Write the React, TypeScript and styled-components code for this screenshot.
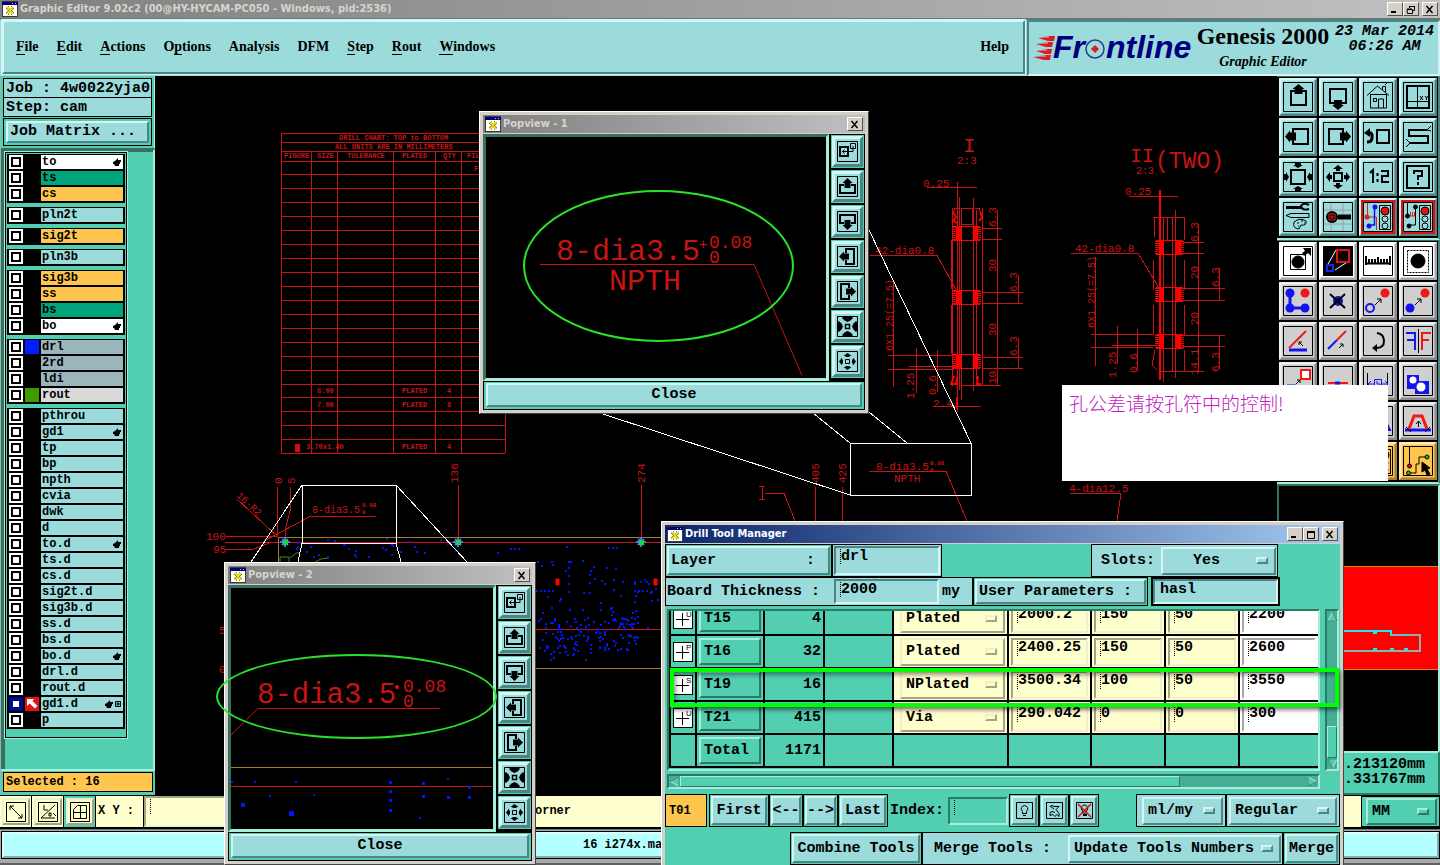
import React from "react";
import styled, { createGlobalStyle, css } from "styled-components";

const mono = `"Liberation Mono", "Courier New", monospace`;
const serif = `"Liberation Serif", "Times New Roman", serif`;
const sans = `"DejaVu Sans Condensed", "Liberation Sans", sans-serif`;

const c = {
  cyan: "#9bdbdb",
  teal: "#52ceb0",
  tealDark: "#357060",
  tealLight: "#a9ecdc",
  light: "#d3f6f4",
  shade: "#4f8484",
  cream: "#ffffce",
  orange: "#ffc64f",
  red: "#c81414",
  chrome: "#d4d0c8",
};

type Tone = "cyan" | "teal" | "cream" | "grey" | "white" | "orange" | "chrome";
const tones: Record<Tone, [string, string, string]> = {
  cyan: [c.cyan, c.light, c.shade],
  teal: [c.teal, c.tealLight, "#2b7a66"],
  cream: [c.cream, "#f0f0d0", "#a3a386"],
  grey: ["#cfcfcf", "#efefef", "#8a8a8a"],
  white: ["#ffffff", "#ffffff", "#a6a6a6"],
  orange: [c.orange, "#ffe9b0", "#a8803a"],
  chrome: [c.chrome, "#ffffff", "#55524c"],
};

const raised = (tone: Tone, w = 2) => css`
  background: ${tones[tone][0]};
  border: ${w}px solid;
  border-color: ${tones[tone][1]} ${tones[tone][2]} ${tones[tone][2]} ${tones[tone][1]};
`;
const sunken = (tone: Tone, w = 2) => css`
  background: ${tones[tone][0]};
  border: ${w}px solid;
  border-color: ${tones[tone][2]} ${tones[tone][1]} ${tones[tone][1]} ${tones[tone][2]};
`;

const GlobalStyle = createGlobalStyle`
  *, *::before, *::after { box-sizing: border-box; }
  body { margin: 0; background: #000; }
  button, input, select { font: inherit; color: inherit; margin: 0; padding: 0; border-radius: 0; }
`;

const Desktop = styled.div`
  position: relative;
  display: flex;
  flex-direction: column;
  min-height: 100vh;
  overflow: hidden;
  font: bold 15px/18px ${mono};
  color: #000;
  background: #000;
`;

/* ---------- window chrome ---------- */

const TitleBar = styled.header<{ $active?: boolean }>`
  display: flex;
  align-items: center;
  gap: 2px;
  height: 18px;
  padding: 0 2px;
  flex: none;
  font: bold 11px/16px ${sans};
  color: ${(p) => (p.$active ? "#fff" : "#d8d4cc")};
  background: ${(p) =>
    p.$active
      ? "linear-gradient(90deg, #0a246a, #a6caf0)"
      : "linear-gradient(90deg, #808080, #c0c0c0)"};
`;
const TitleText = styled.span`
  flex: 1;
  white-space: nowrap;
`;
const ChromeGroup = styled.div`
  display: flex;
  margin-right: 1px;
`;
const ChromeButton = styled.button`
  ${raised("chrome", 1)}
  width: 16px;
  height: 14px;
  display: grid;
  place-items: center;
`;

function AppGlyph() {
  return (
    <svg width="16" height="16" viewBox="0 0 16 16" shapeRendering="crispEdges">
      <rect x="0" y="0" width="16" height="16" fill="#3a3a3a" />
      <rect x="1" y="1" width="14" height="14" fill="#fff" />
      <rect x="0" y="1" width="16" height="3" fill="#00007c" />
      <path d="M10 2h1M13 2h1" stroke="#ccc" />
      <path d="M5 6l6 7M11 6l-6 7" stroke="#8a8a20" strokeWidth="3" />
      <path d="M5 6l6 7M11 6l-6 7" stroke="#e0d820" strokeWidth="2" />
    </svg>
  );
}

const chromePaths = {
  min: <path d="M1 7h5" strokeWidth="2" />,
  max: <path d="M1 1.5h8M1.5 1v7.5h7V1M1 2.5h8" />,
  restore: <path d="M3 1.5h6M3.5 1v2M8.5 1v4.500h-2M1 4.500h5.500v4h-5zM1 4h5" />,
  close: <path d="M1.500 1l6 7M7.500 1l-6 7" strokeWidth="1.500" />,
};

function Chrome({ kind, label }: { kind: keyof typeof chromePaths; label: string }) {
  return (
    <ChromeButton aria-label={label}>
      <svg width="10" height="9" viewBox="0 0 10 9" fill="none" stroke="#000">
        {chromePaths[kind]}
      </svg>
    </ChromeButton>
  );
}

/* ---------- header ---------- */

const HeaderRow = styled.div`
  display: flex;
  flex: none;
  height: 58px;
  border-top: 2px solid #5d7b7b;
  background: ${c.cyan};
`;
const MenuBar = styled.nav`
  flex: 1;
  display: flex;
  align-items: center;
  margin: 0 2px 2px 2px;
  padding: 0 14px 0 12px;
  gap: 18px;
  ${raised("cyan")}
  outline: 1px solid ${c.light};
  font: bold 14px/18px ${serif};
`;
const MenuItem = styled.a`
  color: inherit;
  text-decoration: none;
  &:last-child {
    margin-left: auto;
  }
`;
const Mnemonic = styled.span`
  border-bottom: 1px solid #000;
`;
const Brand = styled.div`
  ${sunken("cyan")}
  width: 413px;
  display: flex;
  align-items: flex-start;
  padding-left: 4px;
`;
const BrandTitle = styled.div`
  width: 136px;
  text-align: center;
  font: bold 24px/28px ${serif};
  white-space: nowrap;
`;
const BrandSub = styled.div`
  font: italic bold 14px/24px ${serif};
`;
const Clock = styled.div`
  flex: 1;
  padding-top: 2px;
  font: italic bold 15px/15px ${mono};
  text-align: center;
  white-space: nowrap;
`;

function Logo() {
  return (
    <svg width="162" height="50" viewBox="0 0 162 50">
      <g fill="#e01820">
        <path d="M5 16l11-2h6l-1 5h-6zM3 22l11-2h6l-1 5h-6zM3 29l10-2h6l-1 5h-6zM0 35l12-2h6l-1 5h-6z" />
      </g>
      <g stroke={c.cyan} strokeWidth="1">
        <path d="M2 15l14 0M2 21h13M1 28h13M1 34h12" />
      </g>
      <g fill="#00007e" fontFamily='"Liberation Sans", sans-serif' fontWeight="bold" fontStyle="italic" fontSize="32">
        <text x="20" y="36">Fr</text>
        <text x="73" y="36">ntline</text>
      </g>
      <circle cx="62" cy="27" r="9" fill="none" stroke="#27408b" strokeWidth="1.500" />
      <path d="M62 23l4 4-4 4-4-4z" fill="#e01820" />
    </svg>
  );
}

/* ---------- layer list ---------- */

const Body = styled.div`
  flex: 1;
  display: flex;
  min-height: 720px;
  padding-bottom: 1px;
`;
const Sidebar = styled.aside`
  width: 155px;
  flex: none;
  display: flex;
  flex-direction: column;
  border-left: 1px solid #8fb8b0;
`;
const JobPanel = styled.div`
  background: ${c.teal};
  padding: 2px 2px 2px;
  border-right: 1px solid ${c.tealLight};
  border-bottom: 2px solid ${c.tealDark};
`;
const JobLine = styled.div`
  height: 20px;
  margin-bottom: -1px;
  padding-left: 2px;
  border: 1px solid #000;
  background: ${c.cyan};
  line-height: 19px;
`;
const MatrixBox = styled.div`
  margin-top: 2px;
  padding: 2px;
  border: 1px solid #000;
`;
const MatrixButton = styled.button`
  ${raised("cyan", 2)}
  display: block;
  width: 100%;
  height: 22px;
  padding-left: 2px;
  text-align: left;
`;
const LayerArea = styled.div`
  flex: 1;
  padding-left: 4px;
  padding-top: 2px;
  background: ${c.teal};
  border-right: 2px solid ${c.tealLight};
  box-shadow: inset 4px 2px 0 ${c.tealDark};
`;
const LayerBox = styled.div`
  width: 122px;
  padding: 1px 1px 8px;
  border: 1px solid #000;
  background: ${c.teal};
  outline: 1px solid ${c.tealLight};
  display: flex;
  flex-direction: column;
  gap: 4px;
`;
const LayerGroup = styled.div`
  background: #000;
  padding: 1px 2px 0;
  width: 118px;
`;
const LayerRow = styled.label`
  display: flex;
  gap: 2px;
  height: 16px;
`;
const LayerCheck = styled.input<{ $on?: boolean }>`
  appearance: none;
  width: 14px;
  height: 14px;
  background: #fff;
  border: 2px solid ${(p) => (p.$on ? "#000a8c" : "#fff")};
  box-shadow: inset 0 0 0 2px ${(p) => (p.$on ? "#000a8c" : "#000")};
`;
const Swatch = styled.span<{ $bg: string }>`
  width: 14px;
  height: 14px;
  background: ${(p) => p.$bg};
`;
const LayerName = styled.span<{ $bg: string }>`
  flex: 1;
  display: flex;
  align-items: center;
  height: 14px;
  padding: 0 1px;
  font-size: 12px;
  line-height: 14px;
  background: ${(p) => p.$bg};
  svg {
    margin-left: auto;
  }
`;
const SelectedPanel = styled.div`
  background: ${c.teal};
  border-top: 2px solid ${c.tealLight};
  padding: 1px 2px 3px;
`;
const Selected = styled.div`
  height: 20px;
  padding-left: 2px;
  border: 1px solid #000;
  background: ${c.orange};
  font-size: 12px;
`;

function Hand({ grid }: { grid?: boolean }) {
  return (
    <svg width={grid ? 17 : 9} height="8" viewBox={grid ? "0 0 17 8" : "0 0 9 8"}>
      <path d="M0 4l2-1 3-3v2h3v2h-1v2h-1v2H2L1 6H0z" />
      {grid && <path d="M10.500 1.500h5v5h-5zM13 1v6M10 4h6" fill="none" stroke="#000" />}
    </svg>
  );
}
function RedArrow() {
  return (
    <svg width="14" height="14" viewBox="0 0 14 14" display="block">
      <rect width="14" height="14" fill="#e81010" />
      <path d="M2 2h7L7.500 4l5 5-2.500 2.500-5.500-5L2 9z" fill="#fff" />
    </svg>
  );
}

type Layer = [name: string, bg?: string, swatch?: string, mark?: "hand" | "both"];
const G = "#00a57b";
const S = "#9bb5bd";
const layerGroups: Layer[][] = [
  [["to", "#fff", "", "hand"], ["ts", G], ["cs", c.orange]],
  [["pln2t"]],
  [["sig2t", c.orange]],
  [["pln3b"]],
  [["sig3b", c.orange], ["ss", c.orange], ["bs", G], ["bo", "#fff", "", "hand"]],
  [["drl", S, "#001cff"], ["2rd", S], ["ldi", S], ["rout", "#dadada", "#3f9a00"]],
  [
    ["pthrou"], ["gd1", "", "", "hand"], ["tp"], ["bp"], ["npth"], ["cvia"], ["dwk"], ["d"],
    ["to.d", "", "", "hand"], ["ts.d"], ["cs.d"], ["sig2t.d"], ["sig3b.d"], ["ss.d"], ["bs.d"],
    ["bo.d", "", "", "hand"], ["drl.d"], ["rout.d"], ["gd1.d", "", "arrow", "both"], ["p"],
  ],
];

/* ---------- tool palette ---------- */

const RightColumn = styled.aside`
  width: 163px;
  flex: none;
  display: flex;
  flex-direction: column;
`;
const Palette = styled.div`
  display: grid;
  grid-template-columns: repeat(4, 38px);
  gap: 2px;
  padding: 1px 0 2px 2px;
  border-bottom: 2px solid ${c.tealLight};
  border-top: 1px solid ${c.tealDark};
  border-right: 2px solid ${c.shade};
  background: #000;
`;
const ToolButton = styled.button<{ $tone: Tone; $alert?: boolean; $small?: boolean }>`
  ${(p) => raised(p.$tone, p.$small ? 3 : 2)}
  width: ${(p) => (p.$small ? 31 : 38)}px;
  height: ${(p) => (p.$small ? 31 : 38)}px;
  display: grid;
  place-items: center;
  box-shadow: ${(p) =>
    p.$alert ? "inset 0 0 0 2px #e01010" : p.$small ? "none" : `inset -1px -1px 0 ${tones[p.$tone][2]}88, inset 1px 1px 0 ${tones[p.$tone][1]}88`};
`;
const Overview = styled.div`
  flex: 1;
  border-left: 2px solid ${c.tealDark};
  border-right: 2px solid ${c.tealLight};
  border-top: 2px solid ${c.tealDark};
  overflow: hidden;
`;
const Coords = styled.div`
  ${raised("teal")}
  height: 44px;
  padding: 4px 13px 0 0;
  font-size: 15px;
  line-height: 15px;
  text-align: right;
`;

const outwardArrow = "M0 0l5 4h-3v2h-4v-2h-3z";

const icons: Record<string, React.ReactNode> = {
  up: (
    <>
      <path d="M12 9H8v14h15V9h-4" strokeWidth="2" />
      <path d="M15.500 2l6 5h-2v5h-8V7h-2z" fill="#000" stroke="none" />
    </>
  ),
  down: (
    <>
      <path d="M12 21H7V7h16v14h-4" strokeWidth="2" />
      <path d="M15 28l6-5h-2v-5h-8v5H9z" fill="#000" stroke="none" />
    </>
  ),
  home: (
    <path d="M4 13.500L14.500 4 26 13.500M7.500 12v14h16V12M7.500 12.500h16M10.500 16.500h3v3h-3zM15.500 26v-9h5v9M19.500 8V4.500h3V10M22 3l2-2" />
  ),
  grid: (
    <>
      <path d="M4 4h22v22H4z" strokeWidth="2" />
      <path d="M14.500 4v22M4 19.500h22" />
      <path d="M17 14l3 4M20 14l-3 4M22 14l1.500 2 1.500-2M23.500 16v2" />
    </>
  ),
  left: (
    <>
      <path d="M10 11V7h15v15H10v-4" strokeWidth="2" />
      <path d="M2 14.500l5-6v2h6v8H7v2z" fill="#000" stroke="none" />
    </>
  ),
  right: (
    <>
      <path d="M20 11V7H6v15h14v-4" strokeWidth="2" />
      <path d="M28 14.500l-5-6v2h-6v8h6v2z" fill="#000" stroke="none" />
    </>
  ),
  back: (
    <>
      <path d="M14 8h12v13H14z" strokeWidth="2" />
      <path d="M5 11q5-1 4 5 0 4-5 4" strokeWidth="3" />
      <path d="M1 11l6-5v9z" fill="#000" stroke="none" />
    </>
  ),
  snake: (
    <>
      <path d="M24 8H6v6h19v7H7" strokeWidth="2" />
      <path d="M24 8l4-4M24 8l4 1M7 21l-4-4M7 21l-4 4" />
    </>
  ),
  zoomIn: (
    <>
      <path d="M8 8h14v14H8z" strokeWidth="2" />
      {[0, 90, 180, 270].map((r) => (
        <path key={r} d="M15 6l5-3h-2V1h-6v2h-2z" transform={`rotate(${r} 15 15)`} fill="#000" stroke="none" />
      ))}
    </>
  ),
  zoomOut: (
    <>
      <path d="M11 11h8v8h-8z" strokeWidth="2" />
      {[0, 90, 180, 270].map((r) => (
        <path key={r} d={outwardArrow} transform={`rotate(${r} 15 15) translate(15 3)`} fill="#000" stroke="none" />
      ))}
    </>
  ),
  ratio: <path d="M7 11l3-3v13M14.500 11v3M14.500 17v3M18 9h7v5h-6v6h7" strokeWidth="2" />,
  help: (
    <>
      <path d="M4 4h22v22H4z" strokeWidth="2" />
      <path d="M11 12V9h8v5h-4v4M15 20v3" strokeWidth="2" />
    </>
  ),
  tools: (
    <>
      <path d="M3 5.500h15" strokeWidth="3" />
      <path d="M26 3q-6-3-8 1 1 5 8 3" strokeWidth="2" />
      <path d="M3 13.500l5-2h18v4H8zM11 20q6-5 12-1 1 5-5 4l-2 4q-7-1-5-7z" />
      <path d="M14 21h2M18 19h2M21 21h1M15 24h1" />
    </>
  ),
  probe: (
    <>
      <path d="M8 1v28M20 1v28M1 8h28M1 22h28" stroke="#a89a9a" />
      <circle cx="9" cy="15" r="6" fill="#000" stroke="none" />
      <path d="M15 15h13" strokeWidth="5" />
      <path d="M6 12h6v6H6zM8 14h2v2H8z" stroke="#e02020" />
    </>
  ),
  lights: (
    <>
      <path d="M4.500 1v14h9v13" stroke="#e02020" />
      <path d="M11.500 5v18H6" stroke="#1010f0" strokeWidth="1.500" />
      <circle cx="12" cy="5" r="2.500" fill="#1010f0" stroke="none" />
      <circle cx="6" cy="24" r="2.500" fill="#1010f0" stroke="none" />
      <circle cx="4" cy="15" r="2.500" fill="#e02020" stroke="none" />
      <path d="M16.500 3.500v24h11v-24z" />
      <circle cx="22" cy="9" r="4" fill="#e81010" />
      <circle cx="22" cy="17" r="3" />
      <circle cx="22" cy="24" r="3" />
    </>
  ),
  lights2: (
    <>
      <path d="M4.500 1v14M12.500 5v18H6" />
      <circle cx="12.500" cy="5" r="2" fill="#000" />
      <circle cx="6" cy="24" r="2" fill="#000" />
      <circle cx="4.500" cy="14" r="2" fill="#000" />
      <path d="M7.500 10v4M9.500 10v4M11.500 10v4M7 14h5" stroke="#e02020" />
      <path d="M16.500 3.500v24h11v-24z" />
      <circle cx="22" cy="9" r="4" fill="#e81010" />
      <circle cx="22" cy="17" r="3" />
      <circle cx="22" cy="24" r="3" />
    </>
  ),
  moveDot: (
    <>
      <path d="M7.500 8.500h15v15h-15z" />
      <circle cx="15" cy="16" r="6" fill="#000" />
      <path d="M20 2h8v8l-3-3-4 3-2-3 3-2z" fill="#000" stroke="none" />
    </>
  ),
  boxes: (
    <>
      <path d="M0 0h30v30H0z" fill="#000" />
      <path d="M5 18l8-14M12 24l14-9" stroke="#fff" />
      <path d="M14 4h12v12H14z" stroke="#e81010" strokeWidth="2" />
      <path d="M4 19h6v6H4z" stroke="#1828f0" strokeWidth="2" />
    </>
  ),
  ruler: <path d="M3 19V10M6 17v-4M9 17v-4M12 17v-4M15 17v-6M18 17v-4M21 17v-4M24 17v-4M27 19V10M2 17.500h26" strokeWidth="2" />,
  dashDot: (
    <>
      <path d="M4.500 4.500h21v22h-21z" strokeDasharray="2 1" />
      <circle cx="15" cy="15" r="7" fill="#000" />
    </>
  ),
  netDots: (
    <>
      <path d="M7 7v15h14" stroke="#1414f0" strokeWidth="3" />
      <circle cx="7" cy="7" r="4.500" fill="#1414f0" stroke="none" />
      <circle cx="7" cy="22" r="4.500" fill="#1414f0" stroke="none" />
      <circle cx="22" cy="22" r="4.500" fill="#1414f0" stroke="none" />
      <circle cx="22" cy="7" r="4.500" fill="#f01818" stroke="none" />
    </>
  ),
  crossDot: (
    <>
      <circle cx="15" cy="15" r="5" fill="#1414c0" stroke="none" />
      <path d="M7 8l15 14M22 8L7 22" strokeWidth="2" />
    </>
  ),
  ringTo: (
    <>
      <circle cx="7" cy="22" r="4" stroke="#1414f0" strokeWidth="2" />
      <circle cx="22" cy="7" r="4.500" fill="#f01818" stroke="none" />
      <path d="M12 19l6-6M14 13h4v4" />
    </>
  ),
  dotTo: (
    <>
      <circle cx="7" cy="22" r="4.500" fill="#1414f0" stroke="none" />
      <circle cx="22" cy="7" r="4.500" fill="#f01818" stroke="none" />
      <path d="M12 19l6-6M14 13h4v4" />
    </>
  ),
  angle: (
    <>
      <path d="M6 24h18" stroke="#1414f0" strokeWidth="3" />
      <path d="M6 22L23 5" stroke="#f01818" strokeWidth="2" />
      <path d="M20 20l-4-4M16 19v-3h3" />
    </>
  ),
  line: (
    <>
      <path d="M5 23l9-9" stroke="#1414f0" strokeWidth="2" />
      <path d="M14 14l9-9" stroke="#f01818" strokeWidth="2" />
      <path d="M16 22l4-4M17 18h3v3" />
    </>
  ),
  rotate: (
    <>
      <path d="M14 7q7 1 7 8t-8 7" strokeWidth="2" />
      <path d="M9 22l5-4v8z" fill="#000" stroke="none" />
    </>
  ),
  mirror: (
    <>
      <path d="M3 7h9v17M4 14h8" stroke="#1414f0" strokeWidth="2" />
      <path d="M28 7h-9v17M19 14h7" stroke="#f01818" strokeWidth="2" />
      <path d="M15.500 3v24" />
    </>
  ),
  copyBox: (
    <>
      <path d="M18 4h9v9h-9z" fill="#fff" stroke="#f01818" strokeWidth="2" />
      <path d="M4 19h9v8H4z" stroke="#1414f0" />
      <path d="M13 18l4-4M14 14h3v3" />
    </>
  ),
  bar: (
    <>
      <path d="M5 17h20" stroke="#f01818" strokeWidth="2" />
      <path d="M12 17h5" stroke="#1414f0" strokeWidth="3" />
    </>
  ),
  measure: (
    <>
      <path d="M4.500 7v21M24.500 7v21" />
      <path d="M11.500 13.500h7v10h-7zM5 18h6M19 18h6M8 15l-3 3 3 3M22 15l3 3-3 3M14 15v3h3v3" stroke="#1414f0" />
    </>
  ),
  blobs: (
    <>
      <path d="M4 9h12v6h10v13H12v-5H4z" fill="#1414f0" stroke="none" />
      <circle cx="10" cy="14" r="3.500" fill="#fff" stroke="none" />
      <circle cx="18" cy="21" r="4.500" fill="#fff" stroke="none" />
    </>
  ),
  arch: (
    <>
      <path d="M2 24h26" stroke="#1414f0" strokeWidth="3" />
      <path d="M6 23l5-13h8l5 13" stroke="#f01818" strokeWidth="3" />
      <path d="M15.500 21v-6M13 18l2.500-3 2.500 3M3 21l5 5M27 21l-5 5" />
    </>
  ),
  slope: <path d="M3 24h24L18 6" stroke="#1414f0" strokeWidth="2" />,
  route: (
    <>
      <path d="M6.500 1v18M5 27h8v-9h3v-7h6" />
      <circle cx="6.500" cy="20" r="2" fill="#d01010" />
      <circle cx="5.500" cy="27" r="2" fill="#20c020" />
      <circle cx="24" cy="11" r="2" fill="#20c020" />
      <path d="M19 16l8 6-3 1 3 5-3 1-2-5-3 2z" fill="#000" />
    </>
  ),
};

function ToolIcon({ name }: { name: string }) {
  return (
    <svg width="30" height="30" viewBox="0 0 30 30" fill="none" stroke="#000">
      {icons[name]}
      <path d="M.500.500h29v29H.500z" />
    </svg>
  );
}

const viewTools = [
  "up", "down", "home", "grid", "left", "right", "back", "snake",
  "zoomIn", "zoomOut", "ratio", "help", "tools", "probe", "lights", "lights2",
];
const editTools: [string, Tone][] = [
  ["moveDot", "white"], ["boxes", "white"], ["ruler", "white"], ["dashDot", "white"],
  ["netDots", "grey"], ["crossDot", "grey"], ["ringTo", "grey"], ["dotTo", "grey"],
  ["angle", "grey"], ["line", "grey"], ["rotate", "grey"], ["mirror", "grey"],
  ["copyBox", "grey"], ["bar", "grey"], ["measure", "grey"], ["blobs", "grey"],
  ["slope", "grey"], ["slope", "grey"], ["slope", "grey"], ["arch", "grey"],
  ["route", "orange"], ["route", "orange"], ["lights", "orange"], ["route", "orange"],
];

function OverviewMap() {
  return (
    <svg width="159" height="264" viewBox="1279 486 159 264" fill="none" display="block" shapeRendering="crispEdges">
      <rect x="1279" y="566" width="159" height="103" fill="#ff0000" stroke="#e08000" />
      <path d="M1279 631h112v4h29v16h-141" stroke="#8fb0b0" strokeWidth="2" />
      <path d="M1279 631h112v5M1373 633h4M1404 635h4M1373 649h4M1390 649h4M1404 649h4" stroke="#20e8e8" strokeWidth="2" />
    </svg>
  );
}

/* ---------- drawing area ---------- */

const Canvas = styled.main`
  flex: 1;
  min-width: 0;
  overflow: hidden;
  svg {
    display: block;
  }
`;

type Label = [text: string, x: number, y: number, size: number, rot?: number];
const labels: Label[] = [
  ["DRILL CHART: TOP to BOTTOM", 339, 140, 7],
  ["ALL UNITS ARE IN MILLIMETERS", 335, 149, 7],
  ["FIGURE", 284, 158, 7], ["SIZE", 317, 158, 7], ["TOLERANCE", 347, 158, 7],
  ["PLATED", 402, 158, 7], ["QTY", 443, 158, 7], ["FIL", 467, 158, 7], ["F", 474, 171, 7],
  ["6.00", 317, 393, 7], ["PLATED", 402, 393, 7], ["4", 447, 393, 7],
  ["7.00", 317, 407, 7], ["PLATED", 402, 407, 7], ["8", 447, 407, 7],
  ["3.70x1.40", 306, 449, 7], ["PLATED", 402, 449, 7], ["4", 447, 449, 7],
  ["8-dia3.5", 312, 513, 10], ["0.08", 362, 507, 6], ["0", 362, 514, 6],
  ["16-R2", 236, 496, 10, 43],
  ["0", 282, 484, 11, -90], ["5", 295, 484, 11, -90],
  ["136", 458, 483, 11, -90], ["274", 645, 483, 11, -90],
  ["405", 819, 483, 11, -90], ["425", 846, 483, 11, -90],
  ["100", 206, 540, 11], ["95", 213, 553, 11],
  ["5", 219, 634, 11], ["0", 219, 673, 11],
  ["8-dia3.5", 876, 470, 11], ["0.08", 930, 465, 6], ["0", 930, 472, 6], ["NPTH", 894, 482, 11],
  ["4-dia12.5", 1069, 492, 11],
  ["2:3", 957, 164, 11], ["0.25", 923, 187, 11], ["42-dia0.8", 875, 254, 11],
  ["6.3", 996, 227, 11, -90], ["30", 996, 272, 11, -90], ["30", 996, 336, 11, -90],
  ["6.3", 1017, 292, 11, -90], ["6.3", 1017, 356, 11, -90], ["10", 996, 384, 11, -90],
  ["6X1.25(=7.5)", 893, 351, 10, -90], ["1.25", 914, 399, 11, -90], ["0.6", 936, 395, 11, -90],
  ["2.4", 933, 407, 11],
  ["2:3", 1136, 174, 10], ["0.25", 1125, 195, 11], ["42-dia0.8", 1075, 252, 11],
  ["6.3", 1198, 242, 11, -90], ["20", 1198, 279, 11, -90], ["20", 1198, 325, 11, -90],
  ["6.3", 1219, 287, 11, -90], ["6.3", 1219, 372, 11, -90], ["14.1", 1198, 375, 11, -90],
  ["6X1.25(=7.5)", 1095, 328, 10, -90], ["1.25", 1116, 378, 11, -90], ["0.6", 1137, 373, 11, -90],
  ["I", 963, 152, 21], ["II", 1130, 162, 20], ["(TWO)", 1155, 168, 23],
];

const chartRows = [133, 142, 151, 161, 174, ...Array.from({ length: 15 }, (_, i) => 188 + 14 * i), 397, 411, 425, 439, 453];
const chartPath =
  chartRows.map((y) => `M281 ${y}H505`).join("") +
  "M281 133V453M505 133V453" +
  [311, 337, 393, 435, 461].map((x) => `M${x} 151V453`).join("");

const detailPaths =
  "M927 187h50M957 182v230M959 197v193M961 210v190M973 198v193M976 210v170" +
  "M952 208v178M982 208v178M961 208h11v16h-11zM952 216l3-8h4M982 216l-3-8h-4M952 240l-1 50M982 240l1 50M952 305l-1 50M982 305l1 50" +
  "M983 228h19M983 239h19M983 292h40M983 303h40M983 357h40M983 368h40M961 385h40" +
  "M997 210v176M1018 275v28M1018 338v30" +
  "M870 255h67l20 37M893 280v107M888 355h66M888 369h66M909 366h48M916 348v45M937 350v42M933 406h48" +
  "M1129 196h49M1153 217h14v23M1154 217v20M1160 210v168M1163 217v165M1172 217v155M1175 210v168M1184 217v23M1172 217h13M1163 217h9" +
  "M1153 260v30M1184 260v30M1153 305v30M1184 305v30M1155 350l-3 15 5 5M1184 350v21M1160 371h44" +
  "M1183 242h21M1183 253h21M1183 288h42M1183 300h42M1183 335h42M1183 346h42" +
  "M1198 224v147M1219 268v32M1219 335v34" +
  "M1071 253h67l22 37M1095 257v109M1091 334h62M1091 347h62M1112 345h48M1117 326v38M1137 329v42" +
  "M869 471h77l21 50M1070 493h51l-4 28M759 486h6M762 486v13M759 499h6M765 493h19l11 28";

const leaderPaths =
  "M237 499l41 38M277 487v49M290 487v24l-5 20v10M226 536h52M226 549h28l18-7h13M458 485v57M641 485v57" +
  "M264 541l47-25h65M815 487v34M842 487v34M225 542h436M535 629h126";

const pads = [226, 290, 354].map((y) => [954, y]).concat([240, 287, 334].map((y) => [1157, y]));

function seeded(seed: number) {
  let s = seed;
  return () => (s = (s * 16807) % 2147483647) / 2147483647;
}
function scatter(seed: number, n: number, x: number, y: number, w: number, h: number) {
  const r = seeded(seed);
  return Array.from({ length: n }, () => `M${Math.round(x + r() * w)} ${Math.round(y + r() * h)}h2`).join("");
}
const drillDots =
  scatter(11, 24, 296, 539, 100, 22) +
  scatter(5, 8, 400, 538, 60, 22) +
  scatter(23, 44, 537, 560, 122, 60) +
  scatter(31, 130, 538, 618, 100, 34) +
  scatter(47, 12, 610, 604, 40, 26) +
  scatter(53, 12, 550, 648, 70, 12) +
  "M510 549h2M514 549h2M518 549h2M608 548h2M612 548h2M616 548h2M566 547h2M497 553h2M536 591h2M540 591h2M544 591h2M548 591h2M552 591h2" +
  "M569 567v2M569 575v2M569 583v2M569 591v2M590 574v2M590 582v2M590 592v2M634 591h2M638 591h2M642 591h2M646 591h2M634 582h2M640 582h2M646 582h2";

function Drawing() {
  return (
    <svg width="1122" height="719" viewBox="155 76 1122 719" fill="none">
      <g stroke={c.red} shapeRendering="crispEdges">
        <path d={chartPath} />
        <path d={detailPaths} />
        <path d={leaderPaths} />
        <path d="M295 444h4v7h-4z" fill={c.red} />
      </g>
      {pads.map(([x, y]) => (
        <g key={`${x}-${y}`} stroke="#ff0000" shapeRendering="crispEdges">
          <path d={`M${x + 4} ${y}v15M${x + 21} ${y}v15`} strokeWidth="5" />
          <path d={`M${x} ${y + 1}v13M${x + 25} ${y + 1}v13`} strokeWidth="4" strokeDasharray="1 1" />
          <path d={`M${x - 1} ${y}h27M${x - 1} ${y + 14}h27`} />
        </g>
      ))}
      <path d="M953 212l3 5-3 4 4 2M980 212l2 5-3 4M954 376l-3 8h5l1-7M978 376l-1 8 4 0" stroke="#ff0000" strokeWidth="2" />
      <path d="M1160 190v190M957 397v12" stroke="#ff0000" strokeWidth="2" />
      <g stroke="#a87c20" shapeRendering="crispEdges">
        <path d="M278 562V537H661M535 668H661" />
      </g>
      <path d="M280 557h9v8h-9zM290 558l6-5h4M315 562l6-3 8-1" stroke="#3f8a10" />
      <path d={drillDots} stroke="#0018f0" strokeWidth="2" />
      <path d="M556 579h3v6h-3zM654 579h3v6h-3z" fill="#f00" stroke="#f00" />
      {[285, 458, 641].map((x) => (
        <g key={x}>
          <path d={`M${x - 5} 542h10M${x} 537v10M${x - 3} 539l6 6M${x + 3} 539l-6 6`} stroke="#5070ff" strokeWidth="2" />
          <rect x={x - 2} y="540" width="5" height="5" fill="#18d840" />
        </g>
      ))}
      <g fill={c.red} fontFamily='"Liberation Mono", monospace'>
        {labels.map(([t, x, y, s, r], i) => (
          <text key={i} x={x} y={y} fontSize={s} fontWeight={s < 8 ? 700 : 400} transform={r ? `rotate(${r} ${x} ${y})` : undefined}>
            {t}
          </text>
        ))}
      </g>
      <g stroke="#fff" shapeRendering="crispEdges">
        <path d="M850 443h121v52H850zM869 230l102 213M869 412l38 31M600 413l250 82M813 413l37 30" />
        <path d="M302 485h94v58h-94zM302 485l-51 77M396 485l71 77M302 543l-4 19M396 543l5 19" />
      </g>
    </svg>
  );
}

/* ---------- bottom bars ---------- */

const CommandBar = styled.footer`
  display: flex;
  flex: none;
  align-items: stretch;
  height: 33px;
  background: ${c.cream};
  border-bottom: 2px solid #000;
`;
const CommandTool = styled.div<{ $tone: Tone }>`
  width: 32px;
  padding: 2px;
  background: ${(p) => tones[p.$tone][0]};
  border-right: 1px solid #000;
`;
const CommandButton = styled.button<{ $tone: Tone }>`
  ${(p) => raised(p.$tone)}
  width: 28px;
  height: 27px;
  display: grid;
  place-items: center;
`;
const CommandLabel = styled.label`
  width: 48px;
  padding-left: 2px;
  font: bold 12px/30px ${mono};
  border-right: 1px solid #000;
`;
const Hint = styled.span`
  flex: 1;
  padding-left: 1px;
  font-size: 12px;
  line-height: 31px;
`;
const UnitBox = styled.div`
  width: 79px;
  display: flex;
  padding: 1px 2px;
  background: ${c.teal};
  border: 1px solid #000;
`;
const StatusBar = styled.div`
  flex: none;
  height: 36px;
  padding: 2px 1px 4px 2px;
  background: #a9a9a9;
  border-top: 1px solid ${c.shade};
  border-bottom: 2px solid #606060;
`;
const StatusField = styled.div`
  ${raised("cyan")}
  border-color: #dfffff #7ab0b0 #7ab0b0 #dfffff;
  height: 26px;
  padding-left: 579px;
  background: #b4ffff;
  outline: 1px solid #000;
  font-size: 12px;
  line-height: 22px;
`;

/* ---------- shared form parts ---------- */

const FieldShell = styled.span<{ $tone: Tone; $w?: number; $h?: number; $caret?: boolean }>`
  ${(p) => sunken(p.$tone)}
  display: flex;
  flex: none;
  align-items: flex-start;
  width: ${(p) => (p.$w ? `${p.$w}px` : "100%")};
  height: ${(p) => p.$h ?? 28}px;
  padding-left: 4px;
  &::before {
    content: "";
    flex: none;
    height: 15px;
    margin-top: 1px;
    border-left: 1px dotted ${(p) => (p.$caret === false ? "transparent" : "#000")};
  }
  input {
    width: 100%;
    min-width: 0;
    height: 17px;
    border: 0;
    background: transparent;
    outline: 0;
  }
`;
function Field(p: { label: string; value: string; tone: Tone; w?: number; h?: number; caret?: boolean; id?: string }) {
  return (
    <FieldShell $tone={p.tone} $w={p.w} $h={p.h} $caret={p.caret}>
      <input id={p.id} aria-label={p.label} defaultValue={p.value} />
    </FieldShell>
  );
}

const SelectShell = styled.span<{ $tone: Tone; $w?: number; $h?: number; $pad?: number }>`
  ${(p) => raised(p.$tone)}
  position: relative;
  display: flex;
  flex: none;
  width: ${(p) => (p.$w ? `${p.$w}px` : "100%")};
  height: ${(p) => p.$h ?? 28}px;
  select {
    appearance: none;
    width: 100%;
    padding-left: ${(p) => p.$pad ?? 4}px;
    border: 0;
    background: transparent;
    outline: 0;
  }
  &::after {
    content: "";
    position: absolute;
    right: 6px;
    top: 50%;
    width: 12px;
    height: 7px;
    margin-top: -4px;
    ${(p) => raised(p.$tone, 2)}
    pointer-events: none;
  }
`;
function Select(p: { label: string; value: string; tone: Tone; w?: number; h?: number; pad?: number }) {
  return (
    <SelectShell $tone={p.tone} $w={p.w} $h={p.h} $pad={p.pad}>
      <select aria-label={p.label} defaultValue={p.value}>
        <option>{p.value}</option>
      </select>
    </SelectShell>
  );
}

/* ---------- floating windows ---------- */

const Window = styled.section<{ $x: number; $y: number; $w: number }>`
  position: absolute;
  left: ${(p) => p.$x}px;
  top: ${(p) => p.$y}px;
  width: ${(p) => p.$w}px;
  border: 1px solid;
  border-color: #fff #444 #444 #fff;
  padding: 3px;
  background: ${c.chrome};
`;
const PopBody = styled.div`
  display: grid;
  grid-template-columns: 1fr 36px;
  margin-top: 1px;
  background: #000;
`;
const PopView = styled.div`
  border: 3px solid;
  border-color: ${c.tealDark} ${c.tealLight} ${c.tealLight} ${c.tealDark};
  height: 247px;
  overflow: hidden;
  svg {
    display: block;
  }
`;
const PopTools = styled.div`
  display: flex;
  flex-direction: column;
  gap: 2px;
  padding: 1px 0 0 2px;
`;
const PopToolCell = styled.div`
  width: 33px;
  height: 33px;
  padding: 1px;
  background: ${c.teal};
`;
const CloseCell = styled.div`
  grid-column: 1 / -1;
  padding: 1px 2px 2px;
  background: ${c.teal};
  border: 1px solid #000;
`;
const CloseButton = styled.button`
  ${raised("cyan")}
  display: block;
  width: 100%;
  height: 24px;
`;

const arrowUp = (
  <>
    <path d="M7 9H3v8h15V9h-4" strokeWidth="2" />
    <path d="M10.500 2l5 5h-2v5h-6V7h-2z" fill="#000" stroke="none" />
  </>
);
const turn = (deg: number) => <g transform={`rotate(${deg} 10.500 10.500)`}>{arrowUp}</g>;
const popIcons: [string, React.ReactNode][] = [
  [
    "Link",
    <g key="a">
      <path d="M3 6h8v9H3z" strokeWidth="2" />
      <path d="M13.500 2.500h5v5h-5zM16 5v5.500H5M7.500 8.500l-2 2 2 2" />
    </g>,
  ],
  ["Pan up", turn(0)],
  ["Pan down", turn(180)],
  ["Pan left", turn(-90)],
  ["Pan right", turn(90)],
  [
    "Zoom in",
    <g key="b">
      <path d="M8.500 8.500h4v4h-4z" strokeWidth="1.500" />
      {[0, 90, 180, 270].map((r) => (
        <path key={r} d="M10.500 6l4-2v-1h1V1h-10v2h1v1z" transform={`rotate(${r} 10.500 10.500)`} fill="#000" stroke="none" />
      ))}
    </g>,
  ],
  [
    "Zoom out",
    <g key="d">
      <path d="M8.500 8.500h4v4h-4z" />
      {[0, 90, 180, 270].map((r) => (
        <path key={r} d="M10.500 2l4 3h-2v1h-4v-1h-2z" transform={`rotate(${r} 10.500 10.500)`} fill="#000" stroke="none" />
      ))}
    </g>,
  ],
];

function Popview(p: { n: number; x: number; y: number; w: number; children: React.ReactNode }) {
  return (
    <Window $x={p.x} $y={p.y} $w={p.w}>
      <TitleBar>
        <AppGlyph />
        <TitleText>Popview - {p.n}</TitleText>
        <Chrome kind="close" label="Close window" />
      </TitleBar>
      <PopBody>
        <PopView>{p.children}</PopView>
        <PopTools>
          {popIcons.map(([label, shape]) => (
            <PopToolCell key={label}>
              <ToolButton $tone="cyan" $small aria-label={label}>
                <svg width="21" height="21" viewBox="0 0 21 21" fill="none" stroke="#000">
                  {shape}
                  <path d="M.500.500h20v20H.500z" />
                </svg>
              </ToolButton>
            </PopToolCell>
          ))}
        </PopTools>
        <CloseCell>
          <CloseButton>Close</CloseButton>
        </CloseCell>
      </PopBody>
    </Window>
  );
}

/* ---------- drill tool manager ---------- */

const Manager = styled.div`
  display: flex;
  flex-direction: column;
  margin-top: 1px;
  background: ${c.teal};
`;
const Row = styled.div<{ $h: number; $mt?: number }>`
  display: flex;
  height: ${(p) => p.$h}px;
  margin-top: ${(p) => p.$mt ?? 0}px;
`;
const Box = styled.div<{ $w: number; $tone?: Tone; $ml?: number; $edge?: number; $pad?: number }>`
  flex: none;
  display: flex;
  align-items: center;
  width: ${(p) => p.$w}px;
  margin-left: ${(p) => p.$ml ?? 0}px;
  padding: ${(p) => p.$pad ?? 1}px;
  border: ${(p) => p.$edge ?? 1}px solid #000;
  background: ${(p) => tones[p.$tone ?? "cyan"][0]};
  white-space: pre;
`;
const ToolTag = styled.span`
  font-size: 12px;
`;
const Unit = styled.span`
  padding-left: 3px;
`;
const Button = styled.button<{ $left?: boolean; $tone?: Tone }>`
  ${(p) => raised(p.$tone ?? "cyan")}
  display: grid;
  align-items: center;
  justify-content: ${(p) => (p.$left ? "start" : "center")};
  padding-left: ${(p) => (p.$left ? 2 : 0)}px;
  width: 100%;
  height: 100%;
  white-space: pre;
`;
const Spacer = styled.div`
  flex: 1;
`;
const BoxLabel = styled.label<{ $w: number; $indent?: number }>`
  flex: none;
  width: ${(p) => p.$w}px;
  padding-left: ${(p) => p.$indent ?? 0}px;
`;
const TableArea = styled.div`
  display: grid;
  grid-template-columns: 653px 14px;
  gap: 3px 5px;
  padding: 3px 0 5px 2px;
`;
const TableView = styled.div`
  ${sunken("teal")}
  height: 162px;
  overflow: hidden;
`;
const ToolTable = styled.table`
  table-layout: fixed;
  width: 651px;
  margin-top: -8px;
  border-spacing: 0;
  border-left: 2px solid #000;
`;
const Cell = styled.td<{ $bg?: string; $right?: boolean; $pad?: string }>`
  height: 33px;
  padding: ${(p) => p.$pad ?? "1px 2px"};
  border: solid #000;
  border-width: 0 2px 2px 0;
  background: ${(p) => p.$bg ?? c.teal};
  text-align: ${(p) => (p.$right ? "right" : "left")};
  vertical-align: middle;
`;
const RowLabel = styled.button`
  ${raised("teal")}
  display: block;
  width: 62px;
  height: 27px;
  padding-left: 3px;
  text-align: left;
`;
const ShapeMark = styled.button`
  display: block;
  width: 20px;
  height: 20px;
  border: 1px solid #000;
  background: #fff;
`;
const VScroll = styled.div`
  ${sunken("teal")}
  background: #45ae95;
  display: flex;
  flex-direction: column;
  justify-content: space-between;
`;
const HScroll = styled.div`
  ${sunken("teal")}
  background: #45ae95;
  height: 15px;
  display: flex;
`;
const Thumb = styled.div<{ $w?: number; $h?: number }>`
  ${raised("teal", 1)}
  width: ${(p) => (p.$w ? `${p.$w}px` : "auto")};
  height: ${(p) => (p.$h ? `${p.$h}px` : "auto")};
`;
const ScrollArrow = styled.button`
  border: 0;
  background: transparent;
  line-height: 0;
`;

function Arrow({ dir }: { dir: number }) {
  return (
    <ScrollArrow aria-label="Scroll">
      <svg width="11" height="11" viewBox="0 0 11 11">
        <g transform={`rotate(${dir} 5.500 5.500)`}>
          <path d="M5.500 1L10 10H1z" fill={c.teal} stroke={c.tealLight} />
          <path d="M5.500 1L10 10H1" fill="none" stroke="#2b7a66" />
        </g>
      </svg>
    </ScrollArrow>
  );
}

const colWidths = [26, 68, 60, 69, 115, 83, 74, 74, 80];
const tools = [
  ["T15", "4", "Plated", "2000.2", "150", "50", "2200", "U"],
  ["T16", "32", "Plated", "2400.25", "150", "50", "2600", "P"],
  ["T19", "16", "NPlated", "3500.34", "100", "50", "3550", "S"],
  ["T21", "415", "Via", "290.042", "0", "0", "300", "U"],
];

function ToolRows() {
  return (
    <ToolTable>
      <colgroup>
        {colWidths.map((w, i) => (
          <col key={i} style={{ width: w }} />
        ))}
      </colgroup>
      <tbody>
        {tools.map(([id, count, type, finish, plus, minus, drill, mark]) => (
          <tr key={id}>
            <Cell>
              <ShapeMark aria-label={`Shape ${id}`}>
                <svg width="18" height="18" viewBox="0 0 18 18" display="block">
                  <path d="M2 9.500h13M8.500 3v13" stroke="#000" />
                  <text x="12" y="7" fontSize="8" fontWeight="400" fontFamily="Liberation Sans, sans-serif">{mark}</text>
                </svg>
              </ShapeMark>
            </Cell>
            <Cell><RowLabel>{id}</RowLabel></Cell>
            <Cell $right>{count}</Cell>
            <Cell />
            <Cell $bg={c.cream} $pad="2px 2px 1px 6px">
              <Select label={`${id} type`} value={type} tone="cream" />
            </Cell>
            {[finish, plus, minus].map((v, i) => (
              <Cell key={i} $bg={c.cream}><Field label={`${id} value ${i + 1}`} value={v} tone="cream" /></Cell>
            ))}
            <Cell $bg="#fff"><Field label={`${id} drill size`} value={drill} tone="white" /></Cell>
          </tr>
        ))}
        <tr>
          <Cell />
          <Cell><RowLabel>Total</RowLabel></Cell>
          <Cell $right>1171</Cell>
          {[0, 1, 2, 3, 4, 5].map((i) => (
            <Cell key={i} />
          ))}
        </tr>
      </tbody>
    </ToolTable>
  );
}

const smallIcons: [string, React.ReactNode][] = [
  ["Highlight", <path key="a" d="M6.500 11.500v-2q-2-2-1-4t3-2q2 0 3 2t-1 4v2zM7 13.500h3" />],
  ["Graph", <path key="b" d="M4 4.500l2-1 2 1h5M13 4.500l-3 3 3 4v3l-2-2-2 2-2-2-3 1v-3l2-1 3 1M4 4l4 3" />],
  [
    "Clear",
    <g key="c">
      <path d="M6.500 11v-2q-2-2-1-4t3-2q2 0 3 2t-1 4v2z" />
      <path d="M7 13h4" strokeWidth="2" />
      <path d="M2 2l13 13M15 2L2 15" stroke="#d81010" strokeWidth="1.500" />
    </g>,
  ],
];

function DrillToolManager() {
  return (
    <Window $x={661} $y={521} $w={683}>
      <TitleBar $active>
        <AppGlyph />
        <TitleText>Drill Tool Manager</TitleText>
        <ChromeGroup>
          <Chrome kind="min" label="Minimize" />
          <Chrome kind="max" label="Maximize" />
        </ChromeGroup>
        <Chrome kind="close" label="Close window" />
      </TitleBar>
      <Manager>
        <Row $h={33}>
          <Box $w={167} $tone="teal"><Button $left>Layer          :</Button></Box>
          <Box $w={110}><Field label="Layer" value="drl" tone="cyan" h={29} /></Box>
          <Spacer />
          <Box $w={187}>
            <BoxLabel $w={68} $indent={8}>Slots:</BoxLabel>
            <Select label="Slots" value="Yes" tone="cyan" w={115} pad={30} />
          </Box>
          <Box $w={62} $tone="teal" $edge={0} />
        </Row>
        <Row $h={29}>
          <Box $w={308}>
            <BoxLabel htmlFor="thickness" $w={167}>Board Thickness :</BoxLabel>
            <Field id="thickness" label="Board Thickness" value="2000" tone="cyan" w={105} h={25} />
            <Unit>my</Unit>
          </Box>
          <Box $w={175} $tone="teal"><Button $left>User Parameters :</Button></Box>
          <Box $w={129} $ml={3} $edge={2} $pad={0}>
            <Field label="User parameters" value="hasl" tone="cyan" h={25} caret={false} />
          </Box>
        </Row>
        <TableArea>
          <TableView><ToolRows /></TableView>
          <VScroll>
            <Arrow dir={0} />
            <Spacer />
            <Thumb $h={32} />
            <Arrow dir={180} />
          </VScroll>
          <HScroll>
            <Arrow dir={-90} />
            <Thumb $w={500} />
            <Spacer />
            <Arrow dir={90} />
          </HScroll>
        </TableArea>
        <Row $h={33}>
          <Box $w={42} $tone="orange" $pad={3}><ToolTag>T01</ToolTag></Box>
          <Box $w={60} $tone="teal" $ml={2}><Button>First</Button></Box>
          <Box $w={34} $tone="teal"><Button>&lt;--</Button></Box>
          <Box $w={35} $tone="teal"><Button>--&gt;</Button></Box>
          <Box $w={50} $tone="teal"><Button>Last</Button></Box>
          <Box $w={121} $tone="teal" $edge={0} $pad={2}>
            <BoxLabel htmlFor="index" $w={58}>Index:</BoxLabel>
            <Field id="index" label="Index" value="" tone="teal" w={60} />
          </Box>
          {smallIcons.map(([label, shape]) => (
            <Box key={label} $w={30} $tone="teal">
              <Button aria-label={label}>
                <svg width="17" height="17" viewBox="0 0 17 17" fill="none" stroke="#000">
                  {shape}
                  <path d="M.500.500h16v16H.500z" />
                </svg>
              </Button>
            </Box>
          ))}
          <Spacer />
          <Box $w={90} $pad={2}><Spacer /><Select label="Units" value="ml/my" tone="cyan" w={81} /></Box>
          <Box $w={114} $pad={2}><Spacer /><Select label="Mode" value="Regular" tone="cyan" w={108} /></Box>
        </Row>
        <Row $h={33} $mt={5}>
          <Spacer />
          <Box $w={132} $tone="teal"><Button>Combine Tools</Button></Box>
          <Box $w={361}>
            <BoxLabel $w={144} $indent={10}>Merge Tools :</BoxLabel>
            <Select label="Merge tools" value="Update Tools Numbers" tone="cyan" w={213} />
          </Box>
          <Box $w={57} $tone="teal"><Button>Merge</Button></Box>
        </Row>
      </Manager>
    </Window>
  );
}

/* ---------- annotations ---------- */

const GreenFrame = styled.div`
  position: absolute;
  left: 670px;
  top: 668px;
  width: 669px;
  height: 39px;
  border: 4px solid #00ff00;
  box-shadow: 2px 3px 4px rgba(0, 0, 0, 0.5), inset 2px 3px 4px rgba(0, 0, 0, 0.4);
  pointer-events: none;
`;
const Ring = styled.div<{ $x: number; $y: number; $w: number; $h: number }>`
  position: absolute;
  left: ${(p) => p.$x}px;
  top: ${(p) => p.$y}px;
  width: ${(p) => p.$w}px;
  height: ${(p) => p.$h}px;
  border: 2px solid #28e428;
  border-radius: 50%;
  pointer-events: none;
`;
const Note = styled.div`
  position: absolute;
  left: 1062px;
  top: 385px;
  width: 326px;
  height: 96px;
  padding: 4px 7px;
  background: #fff;
  color: #c020c0;
  font: 300 19px/27px "Noto Sans CJK SC", sans-serif;
  white-space: nowrap;
`;

const menu: [string, string, string][] = [
  ["", "F", "ile"], ["", "E", "dit"], ["", "A", "ctions"], ["O", "p", "tions"], ["Analysis", "", ""],
  ["DFM", "", ""], ["", "S", "tep"], ["", "R", "out"], ["", "W", "indows"], ["Help", "", ""],
];

export default function App() {
  return (
    <Desktop>
      <GlobalStyle />
      <TitleBar>
        <AppGlyph />
        <TitleText>Graphic Editor 9.02c2 (00@HY-HYCAM-PC050 - Windows, pid:2536)</TitleText>
        <ChromeGroup>
          <Chrome kind="min" label="Minimize" />
          <Chrome kind="restore" label="Restore" />
        </ChromeGroup>
        <Chrome kind="close" label="Close" />
      </TitleBar>
      <HeaderRow>
        <MenuBar>
          {menu.map(([a, key, b]) => (
            <MenuItem href="#" key={a + key + b}>
              {a}
              {key && <Mnemonic>{key}</Mnemonic>}
              {b}
            </MenuItem>
          ))}
        </MenuBar>
        <Brand>
          <Logo />
          <BrandTitle>
            Genesis 2000
            <BrandSub>Graphic Editor</BrandSub>
          </BrandTitle>
          <Clock>
            23 Mar 2014
            <br />
            06:26 AM
          </Clock>
        </Brand>
      </HeaderRow>
      <Body>
        <Sidebar>
          <JobPanel>
            <JobLine>Job : 4w0022yja0</JobLine>
            <JobLine>Step: cam</JobLine>
            <MatrixBox>
              <MatrixButton>Job Matrix ...</MatrixButton>
            </MatrixBox>
          </JobPanel>
          <LayerArea>
            <LayerBox>
              {layerGroups.map((group, gi) => (
                <LayerGroup key={gi}>
                  {group.map(([name, bg, swatch, mark]) => (
                    <LayerRow key={name}>
                      <LayerCheck type="checkbox" $on={swatch === "arrow"} />
                      <Swatch $bg={swatch && swatch !== "arrow" ? swatch : "#000"}>
                        {swatch === "arrow" && <RedArrow />}
                      </Swatch>
                      <LayerName $bg={bg || c.cyan}>
                        {name}
                        {mark && <Hand grid={mark === "both"} />}
                      </LayerName>
                    </LayerRow>
                  ))}
                </LayerGroup>
              ))}
            </LayerBox>
          </LayerArea>
          <SelectedPanel>
            <Selected>Selected : 16</Selected>
          </SelectedPanel>
        </Sidebar>
        <Canvas>
          <Drawing />
        </Canvas>
        <RightColumn>
          <Palette>
            {viewTools.map((t) => (
              <ToolButton key={t} $tone="cyan" $alert={t.startsWith("lights")} aria-label={t}>
                <ToolIcon name={t} />
              </ToolButton>
            ))}
          </Palette>
          <Palette>
            {editTools.map(([t, tone], i) => (
              <ToolButton key={i} $tone={tone} aria-label={t}>
                <ToolIcon name={t} />
              </ToolButton>
            ))}
          </Palette>
          <Overview>
            <OverviewMap />
          </Overview>
          <Coords>
            .213120mm
            <br />
            .331767mm
          </Coords>
        </RightColumn>
      </Body>
      <CommandBar>
        <CommandTool $tone="cream">
          <CommandButton $tone="cream" aria-label="Diagonal">
            <svg width="20" height="20" viewBox="0 0 20 20" fill="none" stroke="#000">
              <path d="M.500.500h19v19H.500zM4 4l12 12M4 8V4h4M16 12v4h-4" />
            </svg>
          </CommandButton>
        </CommandTool>
        <CommandTool $tone="cream">
          <CommandButton $tone="cream" aria-label="Angle">
            <svg width="20" height="20" viewBox="0 0 20 20" fill="none" stroke="#000">
              <path d="M.500.500h19v19H.500zM17 3L3 16h14M6 3v5h4M11 11h2v3h-2zM15 11l3 3" />
            </svg>
          </CommandButton>
        </CommandTool>
        <CommandTool $tone="teal">
          <CommandButton $tone="cream" aria-label="Grid">
            <svg width="20" height="20" viewBox="0 0 20 20" fill="none" stroke="#000">
              <path d="M.500.500h19v19H.500zM3.500 16.500v-9l4-4h9v13zM3 10.500h14M10.500 3v14" />
            </svg>
          </CommandButton>
        </CommandTool>
        <CommandLabel htmlFor="xy">X Y :</CommandLabel>
        <Field id="xy" label="X Y" value="" tone="cream" w={390} h={31} />
        <Hint>orner</Hint>
        <UnitBox>
          <Spacer />
          <Select label="Unit" value="MM" tone="teal" w={71} h={27} />
        </UnitBox>
      </CommandBar>
      <StatusBar>
        <StatusField>16 i274x.ma</StatusField>
      </StatusBar>

      <Popview n={1} x={479} y={111} w={390}>
        <svg width="340" height="241" viewBox="487 138 340 241" fill={c.red} fontFamily='"Liberation Mono", monospace' fontWeight="400">
          <text x="557" y="261" fontSize="30">8-dia3.5</text>
          <text x="700" y="250" fontSize="14">+</text>
          <text x="710" y="249" fontSize="18">0.08</text>
          <text x="710" y="264" fontSize="18">0</text>
          <text x="610" y="291" fontSize="30">NPTH</text>
          <path d="M541 265.500h214l48 111" fill="none" stroke={c.red} />
        </svg>
      </Popview>
      <Popview n={2} x={224} y={562} w={312}>
        <svg width="262" height="241" viewBox="232 589 262 241" fill={c.red} fontFamily='"Liberation Mono", monospace' fontWeight="400">
          <text x="258" y="704" fontSize="29">8-dia3.5</text>
          <text x="404" y="693" fontSize="18">0.08</text>
          <text x="404" y="708" fontSize="18">0</text>
          <circle cx="398" cy="688" r="2" fill="#f01010" />
          <path d="M232 736l27-26.500h182M232 787.500h261" fill="none" stroke={c.red} />
          <path d="M232 768.500h261" stroke="#a87c20" />
          <g fill="#0018f0">
            {[
              [242, 804, 4], [290, 812, 5], [232, 782, 2], [255, 782, 2], [296, 782, 2], [270, 796, 2], [314, 795, 2],
              [390, 782, 3], [390, 791, 3], [390, 800, 3], [390, 810, 3], [423, 783, 3], [423, 796, 3],
              [448, 779, 2], [448, 797, 3], [469, 787, 3], [469, 797, 3], [420, 818, 2],
            ].map(([x, y, s]) => (
              <rect key={`${x}-${y}`} x={x} y={y} width={s} height={s} />
            ))}
          </g>
        </svg>
      </Popview>
      <DrillToolManager />
      <GreenFrame />
      <Ring $x={523} $y={190} $w={271} $h={152} />
      <Ring $x={216} $y={654} $w={281} $h={85} />
      <Note>孔公差请按孔符中的控制!</Note>
    </Desktop>
  );
}
